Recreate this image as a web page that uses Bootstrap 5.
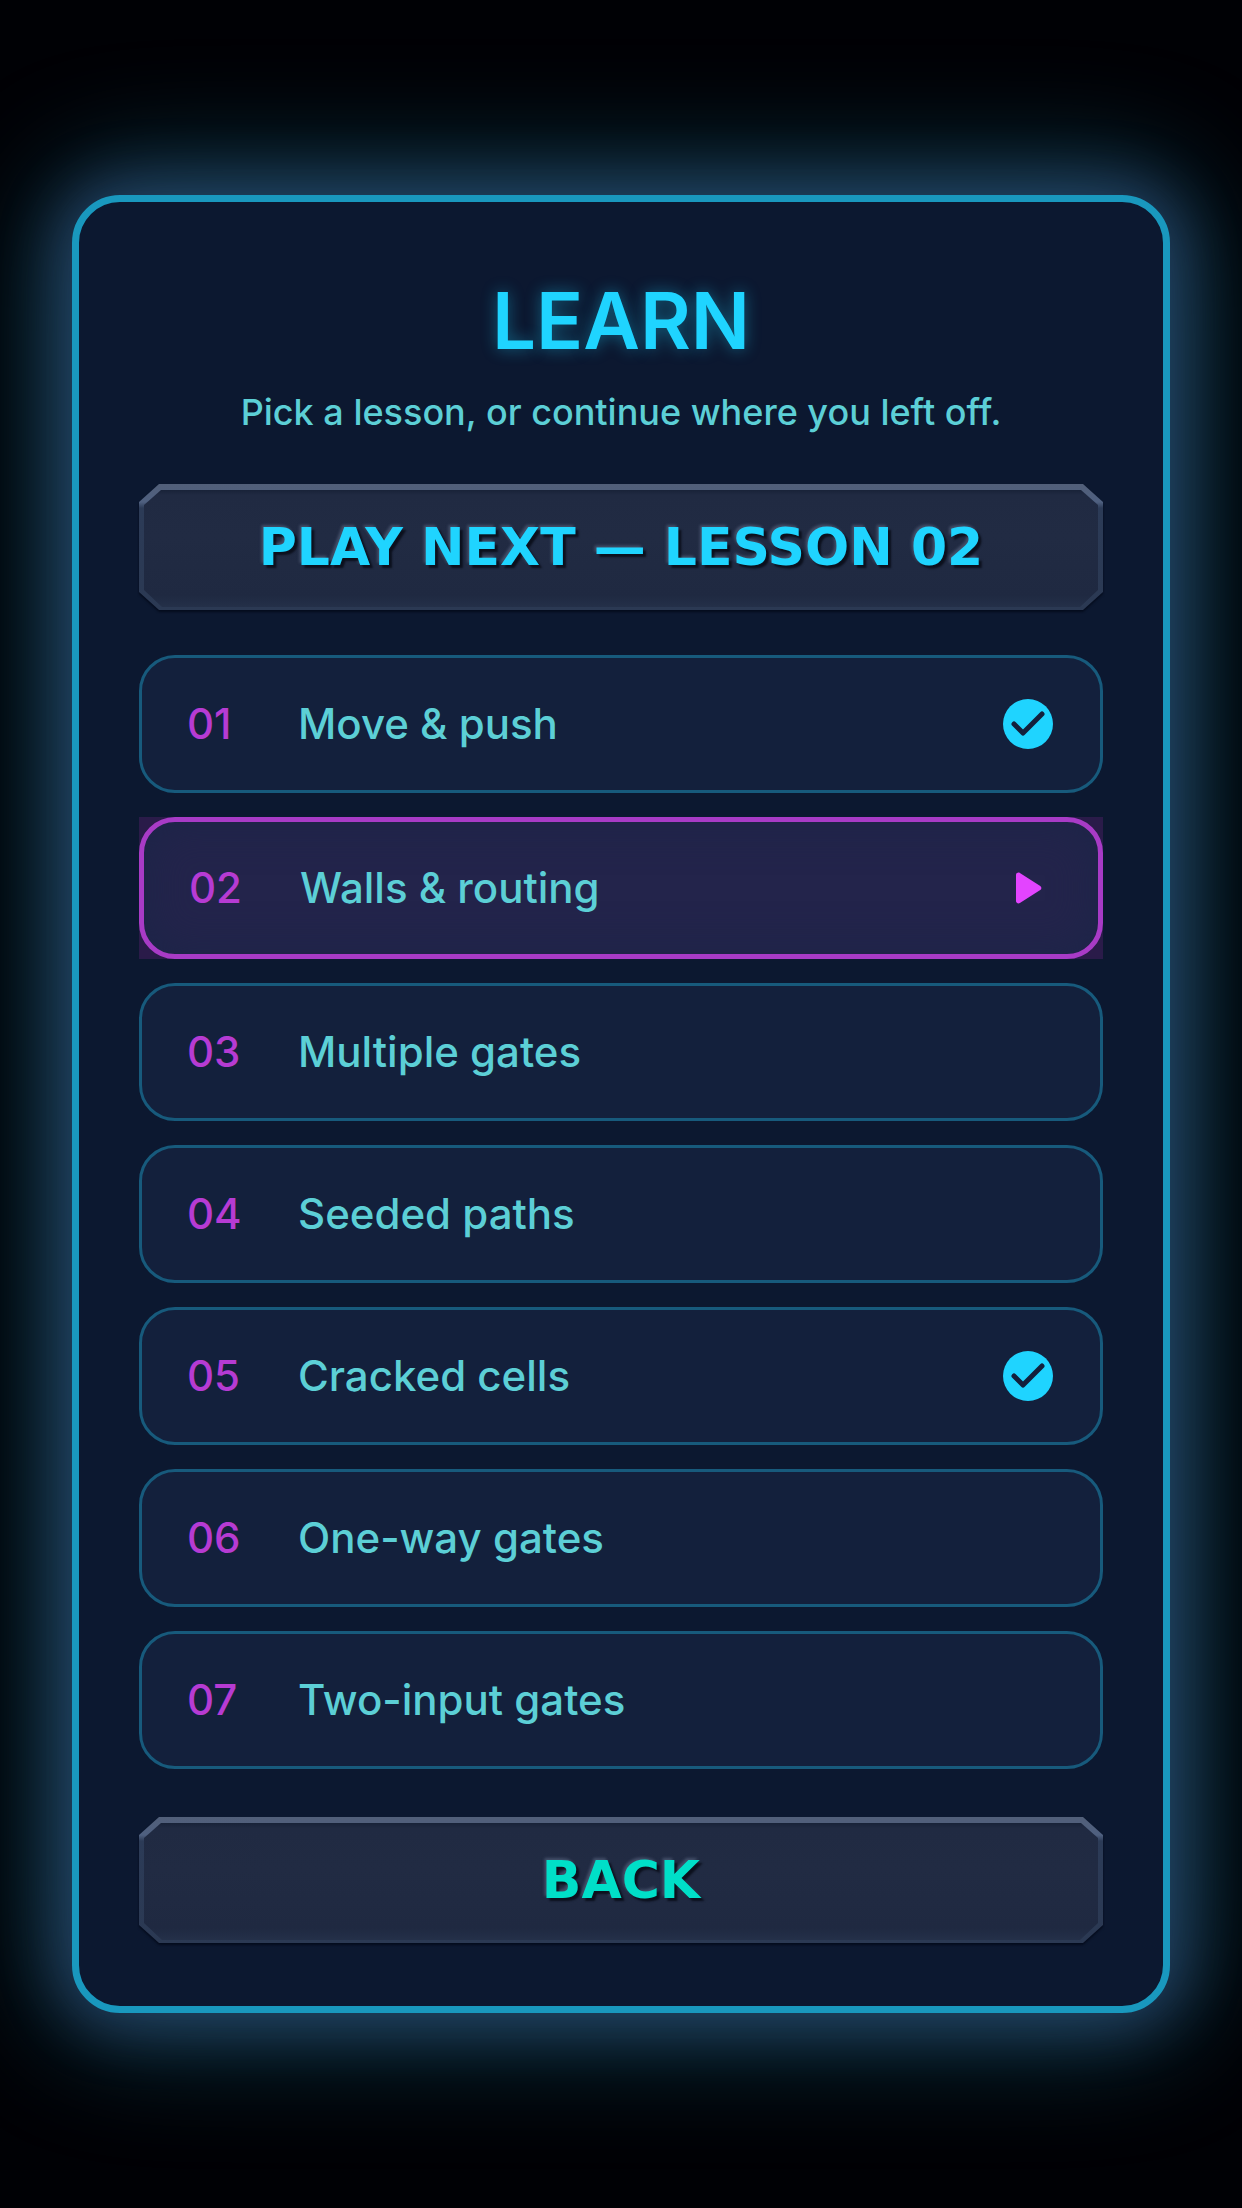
<!DOCTYPE html>
<html lang="en">
<head>
<meta charset="utf-8">
<meta name="viewport" content="width=device-width, initial-scale=1">
<title>Learn</title>
<link href="https://cdn.jsdelivr.net/npm/bootstrap@5.3.0/dist/css/bootstrap.min.css" rel="stylesheet">
<style>
body { background: #000105; font-family: Inter, "Noto Sans", sans-serif; color: #5ccfd6; }
.stage { padding: 72px; }
.panel {
  background: #0c1830;
  border: 7px solid #1998be;
  border-radius: 48px;
  padding: 63px 60px;
  box-shadow: 0 0 60px 14px rgba(90, 115, 200, .32), 0 0 120px 24px rgba(40, 165, 195, .4);
}
.panel-title {
  font-size: 78px; line-height: 112px; font-weight: 600; color: #1fd4ff;
  text-shadow: 0 0 16px rgba(31, 212, 255, .4);
}
.panel-sub { font-size: 36px; line-height: 48px; font-weight: 500; margin: 11px 0 48px; }
.plate {
  position: relative; isolation: isolate; border: 0; background: none;
  height: 126px; font-family: "DejaVu Sans", sans-serif; font-weight: 700;
  font-size: 52px; line-height: 60px; color: #1fd4ff; padding: 0;
  text-shadow: 3px 3px 2px rgba(5, 8, 18, .75), -2px -2px 3px rgba(150, 165, 195, .3);
  filter: drop-shadow(0 2px 1px rgba(0, 5, 20, .7));
}
.plate::before, .plate::after { content: ""; position: absolute; z-index: -1; }
.plate::before {
  inset: 0;
  background: linear-gradient(#525f79 0, #4f6080 18px, #2c3b57 24px, #2b3953 100%);
  clip-path: polygon(20px 0, calc(100% - 20px) 0, 100% 18px, 100% calc(100% - 18px), calc(100% - 20px) 100%, 20px 100%, 0 calc(100% - 18px), 0 18px);
}
.plate::after {
  inset: 6px 5px 3px;
  background: linear-gradient(#182238 0, #202a42 5px, #212b43 40%, #1f2941 90%, #243049 100%);
  clip-path: polygon(17px 0, calc(100% - 17px) 0, 100% 15px, 100% calc(100% - 17px), calc(100% - 18px) 100%, 18px 100%, 0 calc(100% - 17px), 0 15px);
}
.plate-back { color: #00dfc8; }
.lessons { gap: 24px; margin: 45px 0 48px; }
.lesson {
  height: 138px; border: 3px solid #175a7c; border-radius: 36px; background: #13203c;
  padding: 0 42px 0 45px; color: #5ccfd6; text-decoration: none;
  font-size: 42px; line-height: 48px; font-weight: 500;
}
.lesson-no { flex: 0 0 111px; color: #b63bd3; }
.lesson svg { width: 60px; height: 60px; }
.current-slot { background: #2a1b49; }
.current-slot .lesson {
  height: 142px; border: 5px solid #a83bc6; background: #23244b;
  box-shadow: inset 0 0 40px 4px #1d2548;
}
</style>
</head>
<body>
<main class="stage min-vh-100 d-flex flex-column justify-content-center">
  <section class="panel text-center">
    <h1 class="panel-title mb-0">LEARN</h1>
    <p class="panel-sub">Pick a lesson, or continue where you left off.</p>
    <button type="button" class="plate d-block w-100">PLAY NEXT — LESSON 02</button>
    <ul class="lessons list-unstyled d-flex flex-column text-start">
      <li><a class="lesson d-flex align-items-center" href="#l1"><span class="lesson-no">01</span><span class="flex-grow-1">Move &amp; push</span>
        <svg viewBox="0 0 24 24" role="img" aria-label="Completed"><circle cx="12" cy="12" r="10" fill="#1fd4ff"/><path d="M6.400 12 10 15.600 17.600 8" fill="none" stroke="#13203c" stroke-width="2" stroke-linecap="round" stroke-linejoin="round"/></svg></a></li>
      <li class="current-slot"><a class="lesson d-flex align-items-center" href="#l2" aria-current="step"><span class="lesson-no">02</span><span class="flex-grow-1">Walls &amp; routing</span>
        <svg viewBox="0 0 24 24" role="img" aria-label="Play"><path d="M8 6.800v10.400c0 .8.900 1.250 1.550.83l8.150-5.200c.6-.4.6-1.250 0-1.660L9.550 5.980C8.900 5.560 8 6.020 8 6.800Z" fill="#e344ff"/></svg></a></li>
      <li><a class="lesson d-flex align-items-center" href="#l3"><span class="lesson-no">03</span><span>Multiple gates</span></a></li>
      <li><a class="lesson d-flex align-items-center" href="#l4"><span class="lesson-no">04</span><span>Seeded paths</span></a></li>
      <li><a class="lesson d-flex align-items-center" href="#l5"><span class="lesson-no">05</span><span class="flex-grow-1">Cracked cells</span>
        <svg viewBox="0 0 24 24" role="img" aria-label="Completed"><circle cx="12" cy="12" r="10" fill="#1fd4ff"/><path d="M6.400 12 10 15.600 17.600 8" fill="none" stroke="#13203c" stroke-width="2" stroke-linecap="round" stroke-linejoin="round"/></svg></a></li>
      <li><a class="lesson d-flex align-items-center" href="#l6"><span class="lesson-no">06</span><span>One-way gates</span></a></li>
      <li><a class="lesson d-flex align-items-center" href="#l7"><span class="lesson-no">07</span><span>Two-input gates</span></a></li>
    </ul>
    <button type="button" class="plate plate-back d-block w-100">BACK</button>
  </section>
</main>
<script src="https://cdn.jsdelivr.net/npm/bootstrap@5.3.0/dist/js/bootstrap.bundle.min.js"></script>
</body>
</html>
